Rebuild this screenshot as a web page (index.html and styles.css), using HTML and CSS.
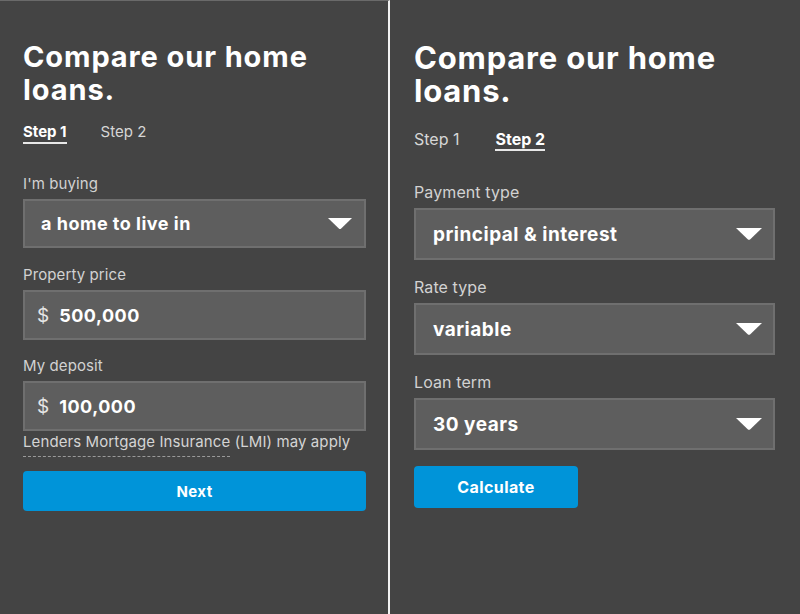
FILE: index.html
```html
<!DOCTYPE html>
<html lang="en">
<head>
<meta charset="utf-8">
<title>Compare our home loans</title>
<link rel="stylesheet" href="styles.css">
</head>
<body>
<div class="screens">
  <section class="panel panel-one">
    <h1 class="title">Compare our home loans.</h1>
    <div class="tabs">
      <span class="tab active">Step 1</span>
      <span class="tab">Step 2</span>
    </div>
    <div class="field first">
      <label class="label">I'm buying</label>
      <div class="box select">
        <span class="value">a home to live in</span>
        <svg class="caret" viewBox="0 0 24 11"><path d="M0 0 H24 L13.2 10.4 Q12 11.4 10.8 10.4 Z" fill="#fff"/></svg>
      </div>
    </div>
    <div class="field">
      <label class="label">Property price</label>
      <div class="box input">
        <span class="cur">$</span><span class="value">500,000</span>
      </div>
    </div>
    <div class="field last">
      <label class="label">My deposit</label>
      <div class="box input">
        <span class="cur">$</span><span class="value">100,000</span>
      </div>
      <p class="note"><span class="dotted">Lenders Mortgage Insurance</span> (LMI) may apply</p>
    </div>
    <button class="btn btn-wide">Next</button>
  </section>
  <section class="panel panel-two">
    <h1 class="title">Compare our home loans.</h1>
    <div class="tabs">
      <span class="tab">Step 1</span>
      <span class="tab active">Step 2</span>
    </div>
    <div class="field first">
      <label class="label">Payment type</label>
      <div class="box select">
        <span class="value">principal &amp; interest</span>
        <svg class="caret" viewBox="0 0 24 11"><path d="M0 0 H24 L13.2 10.4 Q12 11.4 10.8 10.4 Z" fill="#fff"/></svg>
      </div>
    </div>
    <div class="field">
      <label class="label">Rate type</label>
      <div class="box select">
        <span class="value">variable</span>
        <svg class="caret" viewBox="0 0 24 11"><path d="M0 0 H24 L13.2 10.4 Q12 11.4 10.8 10.4 Z" fill="#fff"/></svg>
      </div>
    </div>
    <div class="field">
      <label class="label">Loan term</label>
      <div class="box select">
        <span class="value">30 years</span>
        <svg class="caret" viewBox="0 0 24 11"><path d="M0 0 H24 L13.2 10.4 Q12 11.4 10.8 10.4 Z" fill="#fff"/></svg>
      </div>
    </div>
    <button class="btn btn-small">Calculate</button>
  </section>
</div>
</body>
</html>
```
FILE: styles.css
```css
* { box-sizing: border-box; }
html, body { margin: 0; padding: 0; background: #444444; }
body {
  font-family: Inter, "Open Sans", "DejaVu Sans", sans-serif;
  color: #fff;
  width: 800px;
  height: 614px;
  overflow: hidden;
}
.screens {
  display: flex;
  height: 614px;
}
.panel {
  background: #444444;
  display: flex;
  flex-direction: column;
  align-items: flex-start;
}
.panel-one {
  width: 390px;
  padding: 39px 22px 0 23px;
  border-top: 1px solid #6a6a6a;
  border-right: 2px solid #f2f2f2;
}
.panel-two {
  flex: 1;
  padding: 41px 25px 0 24px;
}
.title {
  margin: 0;
  font-weight: 700;
  font-size: 29px;
  line-height: 33px;
  letter-spacing: 0.9px;
  width: 320px;
}
.panel-two .title { font-size: 31px; line-height: 33px; width: 340px; letter-spacing: 0.8px; }

.tabs {
  display: flex;
  gap: 34px;
  margin-top: 16px;
}
.tab {
  font-size: 15px;
  line-height: 20px;
  color: #d6d6d6;
  padding-bottom: 0;
  border-bottom: 2px solid transparent;
}
.tab.active {
  font-weight: 700;
  color: #fff;
  border-bottom-color: #e8e8e8;
}
.panel-two .tabs { margin-top: 23px; gap: 36px; }
.panel-two .tab { font-size: 16px; line-height: 19px; }

.field {
  align-self: stretch;
  display: flex;
  flex-direction: column;
}
.label {
  font-size: 15px;
  line-height: 20px;
  color: #d2d2d2;
  letter-spacing: 0.1px;
  margin-bottom: 5px;
}
.panel-one .field.first { margin-top: 30px; }
.panel-one .field + .field { margin-top: 17px; }
.panel-one .field.last { margin-top: 16px; }
.panel-two .field.first { margin-top: 31px; }
.panel-two .field + .field { margin-top: 17px; }
.panel-two .label { font-size: 16px; margin-bottom: 6px; }

.box {
  background: #5e5e5e;
  border: 2px solid #6f6f6f;
  display: flex;
  align-items: center;
}
.select { height: 49px; padding: 0 12px 0 16px; justify-content: space-between; }
.input { height: 50px; padding: 0 12px 0 12px; }
.panel-two .select { height: 52px; padding: 0 11px 0 17px; }

.value {
  font-weight: 700;
  font-size: 18px;
  letter-spacing: 0.5px;
  color: #fff;
}
.panel-two .value { font-size: 19px; }
.cur {
  font-size: 19px;
  color: #e6e6e6;
  margin-right: 10px;
}
.caret { width: 24px; height: 11px; display: block; }
.panel-two .caret { width: 26px; height: 12px; }

.note {
  margin: 1px 0 0;
  font-size: 15px;
  line-height: 20px;
  letter-spacing: 0.1px;
  color: #d4d4d4;
}
.dotted {
  display: inline-block;
  padding-bottom: 4px;
  border-bottom: 1px dashed #9a9a9a;
  line-height: 20px;
}

.btn {
  border: 0;
  border-radius: 4px;
  background: #0094d9;
  color: #fff;
  font-family: inherit;
  font-weight: 700;
  letter-spacing: 0.4px;
  cursor: pointer;
}
.btn-wide {
  align-self: stretch;
  height: 40px;
  font-size: 15px;
  margin-top: 14px;
}
.btn-small {
  width: 164px;
  height: 42px;
  font-size: 16px;
  margin-top: 16px;
}
```
